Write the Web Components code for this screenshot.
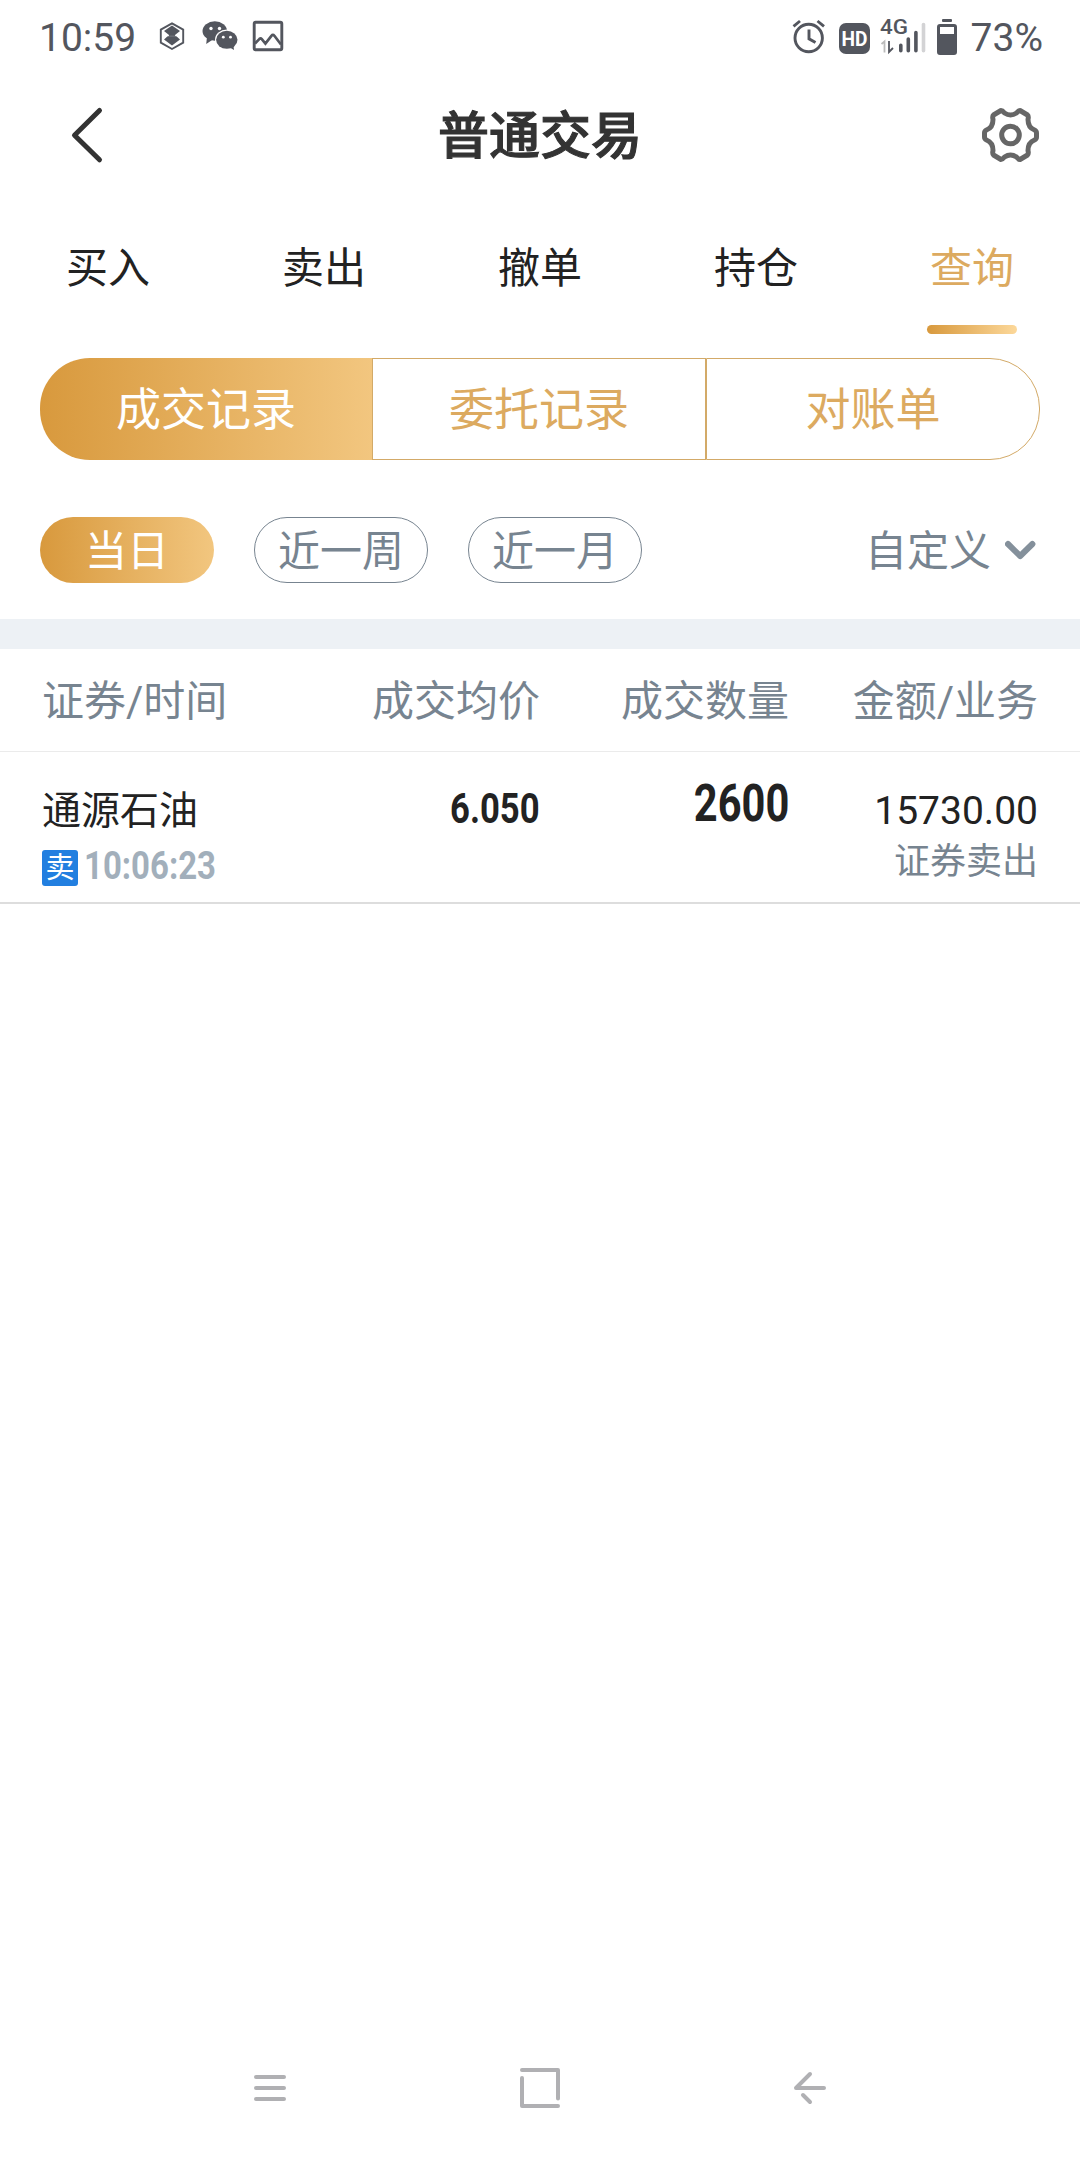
<!DOCTYPE html>
<html lang="zh-CN">
<head>
<meta charset="utf-8">
<title>普通交易</title>
<style>
  body {
    margin: 0;
    background: #fff;
    font-family: Roboto, "Noto Sans CJK SC", sans-serif;
    color: #222;
  }
</style>
</head>
<body>
<trade-app></trade-app>

<script>
// Attaches an open shadow root and fills it from a template
function render(host, html) {
  const template = document.createElement('template');
  template.innerHTML = html;
  host.attachShadow({ mode: 'open' });
  host.shadowRoot.appendChild(template.content.cloneNode(true));
}

/* Phone status bar: clock and notifications left, radio and battery right */
class StatusBar extends HTMLElement {
  constructor() {
    super();
    render(this, `
      <style>
        :host {
          display: flex;
          justify-content: space-between;
          height: 76px;
          padding: 0 37px 0 39px;
          box-sizing: border-box;
          color: #53565e;
          font-size: 39px;
          line-height: 76px;
        }
        .side { display: flex; }
        svg { display: block; height: 76px; }
        svg text { font-family: Roboto, sans-serif; }
      </style>
      <div class="side">
        <span>10:59</span>
        <svg width="150" viewBox="136 0 150 76" fill="none" stroke="#53565e">
          <path d="M172 23.3l11.2 6.3v13L172 49l-11.200-6.400v-13z" stroke-width="1.900"/>
          <path d="M172 25.500l8 5.500-5 4 5 4.500-8 6-8-6 5-4.500-5-4z" fill="#53565e" stroke="none"/>
          <path d="M166 35.700h12" stroke="#fff" stroke-width="1"/>
          <path d="M169 35.700h6" stroke-width="1.200"/>
          <g fill="#53565e" stroke="none">
            <ellipse cx="214.800" cy="31" rx="12.300" ry="9.700"/>
            <path d="M207 37l-.8 7 6-4z"/>
            <ellipse cx="226.800" cy="39.800" rx="11.800" ry="10.200" fill="#fff"/>
            <ellipse cx="226.800" cy="39.800" rx="10.700" ry="9"/>
            <path d="M229 47l5 3-.8-6z"/>
          </g>
          <g fill="#fff" stroke="none">
            <circle cx="211" cy="28.500" r="1.700"/><circle cx="219.500" cy="28.500" r="1.700"/>
            <circle cx="223.300" cy="37.200" r="1.400"/><circle cx="230.500" cy="37.200" r="1.400"/>
          </g>
          <rect x="254.200" y="22.200" width="27.600" height="27.600" rx="1.500" stroke-width="2.900"/>
          <path d="M255 43.500l4.500-4.600q1.200-1 2.300.3l3.600 4.300 6-7.700q1.500-1.800 3 0l6.600 8.700" stroke-width="2.700"/>
        </svg>
      </div>
      <div class="side">
        <svg width="182" viewBox="790 0 182 76" fill="none" stroke="#53565e">
          <circle cx="809.700" cy="38" r="13.700" stroke-width="2.900"/>
          <path d="M810 29.500v9.300l6.500 3.800" stroke-width="2.900"/>
          <path d="M794.500 26.300l6.500-5.300M825 26.300l-6.500-5.300" stroke-width="2.900"/>
          <rect x="840" y="23" width="31" height="31" rx="7" fill="#53565e" stroke="none"/>
          <text x="855.500" y="45.800" font-size="21" font-weight="700" fill="#fff" stroke="none" text-anchor="middle" textLength="26" lengthAdjust="spacingAndGlyphs">HD</text>
          <text x="881" y="33.500" font-size="21" font-weight="500" fill="#53565e" stroke="none" textLength="28" lengthAdjust="spacingAndGlyphs">4G</text>
          <path d="M882.500 44l3-2.500v11" stroke="#bbb" stroke-width="1.800"/>
          <path d="M890 41v11l4-4" stroke-width="1.800"/>
          <g stroke-width="3.600" stroke-linecap="round">
            <path d="M901.800 45.200v5.600M909.300 39v11.800M916.900 32.500v18.300"/>
            <path d="M924.500 24.500v26.300" stroke="#d3d3d5"/>
          </g>
          <rect x="943" y="19" width="10" height="3" rx="1" fill="#53565e" stroke="none"/>
          <path d="M941 24h14q3 0 3 3v25q0 3-3 3h-14q-3 0-3-3V27q0-3 3-3zm0 3v7h14v-7z" fill="#53565e" fill-rule="evenodd" stroke="none"/>
        </svg>
        <span>73%</span>
      </div>
    `);
  }
}
customElements.define('status-bar', StatusBar);

/* Title row with the back arrow and the settings gear */
class NavHeader extends HTMLElement {
  constructor() {
    super();
    render(this, `
      <style>
        :host {
          display: grid;
          grid-template-columns: 1fr auto 1fr;
          align-items: center;
          height: 118px;
          padding: 0 39px 0 65px;
        }
        h1 {
          margin: 0 26px 0 0;
          padding-top: 4px;
          font-size: 51px;
          line-height: 60px;
          font-weight: 500;
          color: #333;
          -webkit-text-stroke: 1.1px #333;
        }
        svg { display: block; }
        .gear { justify-self: end; }
      </style>
      <svg width="42" height="60" viewBox="0 0 42 60">
        <path d="M34.500 5.500L9.500 30.300l25 24.500" fill="none" stroke="#333" stroke-width="5" stroke-linecap="round" stroke-linejoin="round"/>
      </svg>
      <h1><slot></slot></h1>
      <svg class="gear" width="62" height="62" viewBox="-31.500 -31 62 62" fill="none" stroke="#666" stroke-width="5" stroke-linejoin="round">
        <circle r="8.800"/>
        <path d="M-9.500-24.500Q-8-24.500-6-22Q0-18 6-22Q8-24.500 9.500-24.500L17-20Q18.300-19 17.500-15.500Q17.500-7.500 24-5Q26-4 26-2V2Q26 4 24 5Q17.500 7.500 17.500 15.500Q18.300 19 17 20L9.500 24.500Q8 24.500 6 22Q0 18-6 22Q-8 24.500-9.500 24.500L-17 20Q-18.300 19-17.500 15.500Q-17.500 7.500-24 5Q-26 4-26 2V-2Q-26-4-24-5Q-17.500-7.500-17.500-15.500Q-18.300-19-17-20Z"/>
      </svg>
    `);
  }
}
customElements.define('nav-header', NavHeader);

/* One item of the main tab row */
class TabItem extends HTMLElement {
  constructor() {
    super();
    render(this, `
      <style>
        :host {
          display: flex;
          flex: 1;
          flex-direction: column;
          align-items: center;
          height: 140px;
          padding-top: 47px;
          box-sizing: border-box;
          font-size: 42px;
          line-height: 56px;
        }
        i {
          width: 90px;
          height: 9px;
          margin-top: 28px;
          border-radius: 5px;
        }
        :host([active]) { color: #dcaa60; }
        :host([active]) i { background: linear-gradient(90deg, #d8993d, #fcd89a); }
      </style>
      <slot></slot><i></i>
    `);
  }
}
customElements.define('tab-item', TabItem);

/* One third of the segmented switch */
class SegmentItem extends HTMLElement {
  constructor() {
    super();
    render(this, `
      <style>
        :host {
          flex: 1;
          box-sizing: border-box;
          border: 1px solid #d3aa68;
          height: 102px;
          font-size: 45px;
          line-height: 103px;
          text-align: center;
          color: #dcaa60;
        }
        :host(:first-child) { border-radius: 50px 0 0 50px; }
        :host(:last-child) { border-radius: 0 50px 50px 0; }
        :host([active]) {
          color: #fff;
          border: 0;
          line-height: 105px;
          background: linear-gradient(90deg, #d8993d, #f2c67f);
        }
      </style>
      <slot></slot>
    `);
  }
}
customElements.define('segment-item', SegmentItem);

/* Rounded date range chip */
class RangeChip extends HTMLElement {
  constructor() {
    super();
    render(this, `
      <style>
        :host {
          width: 174px;
          height: 66px;
          box-sizing: border-box;
          border: 1px solid #778490;
          border-radius: 33px;
          font-size: 42px;
          line-height: 68px;
          text-align: center;
          color: #778490;
        }
        :host([active]) {
          border: 0;
          line-height: 70px;
          color: #fff;
          background: linear-gradient(90deg, #d8993d, #f2c67f);
        }
      </style>
      <slot></slot>
    `);
  }
}
customElements.define('range-chip', RangeChip);

/* Narrow bold figures; --squeeze sets the width factor, --from the fixed edge */
class DinNumber extends HTMLElement {
  constructor() {
    super();
    render(this, `
      <style>
        :host {
          display: inline-block;
          font-weight: 700;
          transform: scaleX(var(--squeeze, .85));
          transform-origin: var(--from, right) center;
        }
      </style>
      <slot></slot>
    `);
  }
}
customElements.define('din-number', DinNumber);

/* Executed order row */
class DealRow extends HTMLElement {
  constructor() {
    super();
    render(this, `
      <style>
        :host {
          display: grid;
          grid-template-columns: repeat(4, 1fr);
          height: 152px;
          padding: 0 42px;
          box-sizing: border-box;
          border-bottom: 2px solid #ddd;
        }
        .num { text-align: right; }
        .name { padding-top: 33px; font-size: 39px; line-height: 52px; }
        .when { display: flex; align-items: center; margin-top: 13px; }
        .side {
          width: 36px;
          height: 36px;
          border-radius: 3px;
          background: #227fe0;
          color: #fff;
          font-size: 29px;
          line-height: 36px;
          text-align: center;
        }
        .time {
          margin: -5px 0 0 6px;
          font-size: 39px;
          line-height: 36px;
          color: #a2afbb;
          --from: left;
          --squeeze: .845;
        }
        .price { padding-top: 33px; font-size: 42px; line-height: 48px; --squeeze: .825; }
        .count { padding-top: 24px; font-size: 52px; line-height: 56px; --squeeze: .8; }
        .money { padding-top: 35px; font-size: 39px; line-height: 48px; }
        .kind { margin-top: 5px; font-size: 36px; line-height: 44px; color: #778490; }
      </style>
      <div>
        <div class="name"><slot name="name"></slot></div>
        <div class="when">
          <span class="side"><slot name="side"></slot></span>
          <din-number class="time"><slot name="time"></slot></din-number>
        </div>
      </div>
      <div class="num price"><din-number><slot name="price"></slot></din-number></div>
      <div class="num count"><din-number><slot name="count"></slot></din-number></div>
      <div class="num">
        <div class="money"><slot name="money"></slot></div>
        <div class="kind"><slot name="kind"></slot></div>
      </div>
    `);
  }
}
customElements.define('deal-row', DealRow);

/* Android navigation keys */
class SystemKeys extends HTMLElement {
  constructor() {
    super();
    render(this, `
      <style>
        :host {
          display: grid;
          grid-template-columns: repeat(3, 1fr);
          justify-items: center;
          align-items: center;
          height: 144px;
          padding: 0 135px;
        }
        svg {
          fill: none;
          stroke: #b0b0b3;
          stroke-width: 4;
          stroke-linecap: round;
          stroke-linejoin: round;
        }
      </style>
      <svg width="48" height="48" viewBox="-24 -24 48 48"><path d="M-14-11h28M-14 0h28M-14 11h28"/></svg>
      <svg width="48" height="48" viewBox="-24 -24 48 48"><path d="M-18-18h36v28.500M18 18h-36V-10"/></svg>
      <svg width="48" height="48" viewBox="-24 -24 48 48"><path d="M14 0h-28L0-14M-7 7L0 14"/></svg>
    `);
  }
}
customElements.define('system-keys', SystemKeys);

/* The whole screen */
class TradeApp extends HTMLElement {
  constructor() {
    super();
    render(this, `
      <style>
        :host {
          display: flex;
          flex-direction: column;
          width: 1080px;
          height: 2160px;
          overflow: hidden;
          background: #fff;
        }
        .tabs { display: flex; height: 140px; }
        .segments { display: flex; margin: 24px 40px 0; }
        .ranges {
          display: flex;
          align-items: center;
          gap: 40px;
          height: 66px;
          margin: 57px 40px 36px;
        }
        .custom {
          display: flex;
          align-items: center;
          gap: 14px;
          margin-left: auto;
          font-size: 42px;
          line-height: 66px;
          color: #778490;
        }
        .custom span { padding-top: 4px; }
        .band { height: 30px; background: #edf1f5; }
        .head {
          display: grid;
          grid-template-columns: repeat(4, 1fr);
          height: 103px;
          padding: 0 42px;
          box-sizing: border-box;
          border-bottom: 1px solid #ebebeb;
          font-size: 42px;
          line-height: 105px;
          color: #778490;
          text-align: right;
          white-space: nowrap;
        }
        .head :first-child { text-align: left; }
        system-keys { margin-top: auto; }
      </style>
      <status-bar></status-bar>
      <nav-header>普通交易</nav-header>
      <div class="tabs">
        <tab-item>买入</tab-item>
        <tab-item>卖出</tab-item>
        <tab-item>撤单</tab-item>
        <tab-item>持仓</tab-item>
        <tab-item active>查询</tab-item>
      </div>
      <div class="segments">
        <segment-item active>成交记录</segment-item>
        <segment-item>委托记录</segment-item>
        <segment-item>对账单</segment-item>
      </div>
      <div class="ranges">
        <range-chip active>当日</range-chip>
        <range-chip>近一周</range-chip>
        <range-chip>近一月</range-chip>
        <div class="custom">
          <span>自定义</span>
          <svg width="35" height="24" viewBox="0 0 35 24"><path d="M3 6l12.200 12L27.400 6" fill="none" stroke="#84909b" stroke-width="6" stroke-linecap="round" stroke-linejoin="round"/></svg>
        </div>
      </div>
      <div class="band"></div>
      <div class="head">
        <span>证券/时间</span><span>成交均价</span><span>成交数量</span><span>金额/业务</span>
      </div>
      <deal-row>
        <span slot="name">通源石油</span>
        <span slot="side">卖</span>
        <span slot="time">10:06:23</span>
        <span slot="price">6.050</span>
        <span slot="count">2600</span>
        <span slot="money">15730.00</span>
        <span slot="kind">证券卖出</span>
      </deal-row>
      <system-keys></system-keys>
    `);
  }
}
customElements.define('trade-app', TradeApp);
</script>
</body>
</html>
